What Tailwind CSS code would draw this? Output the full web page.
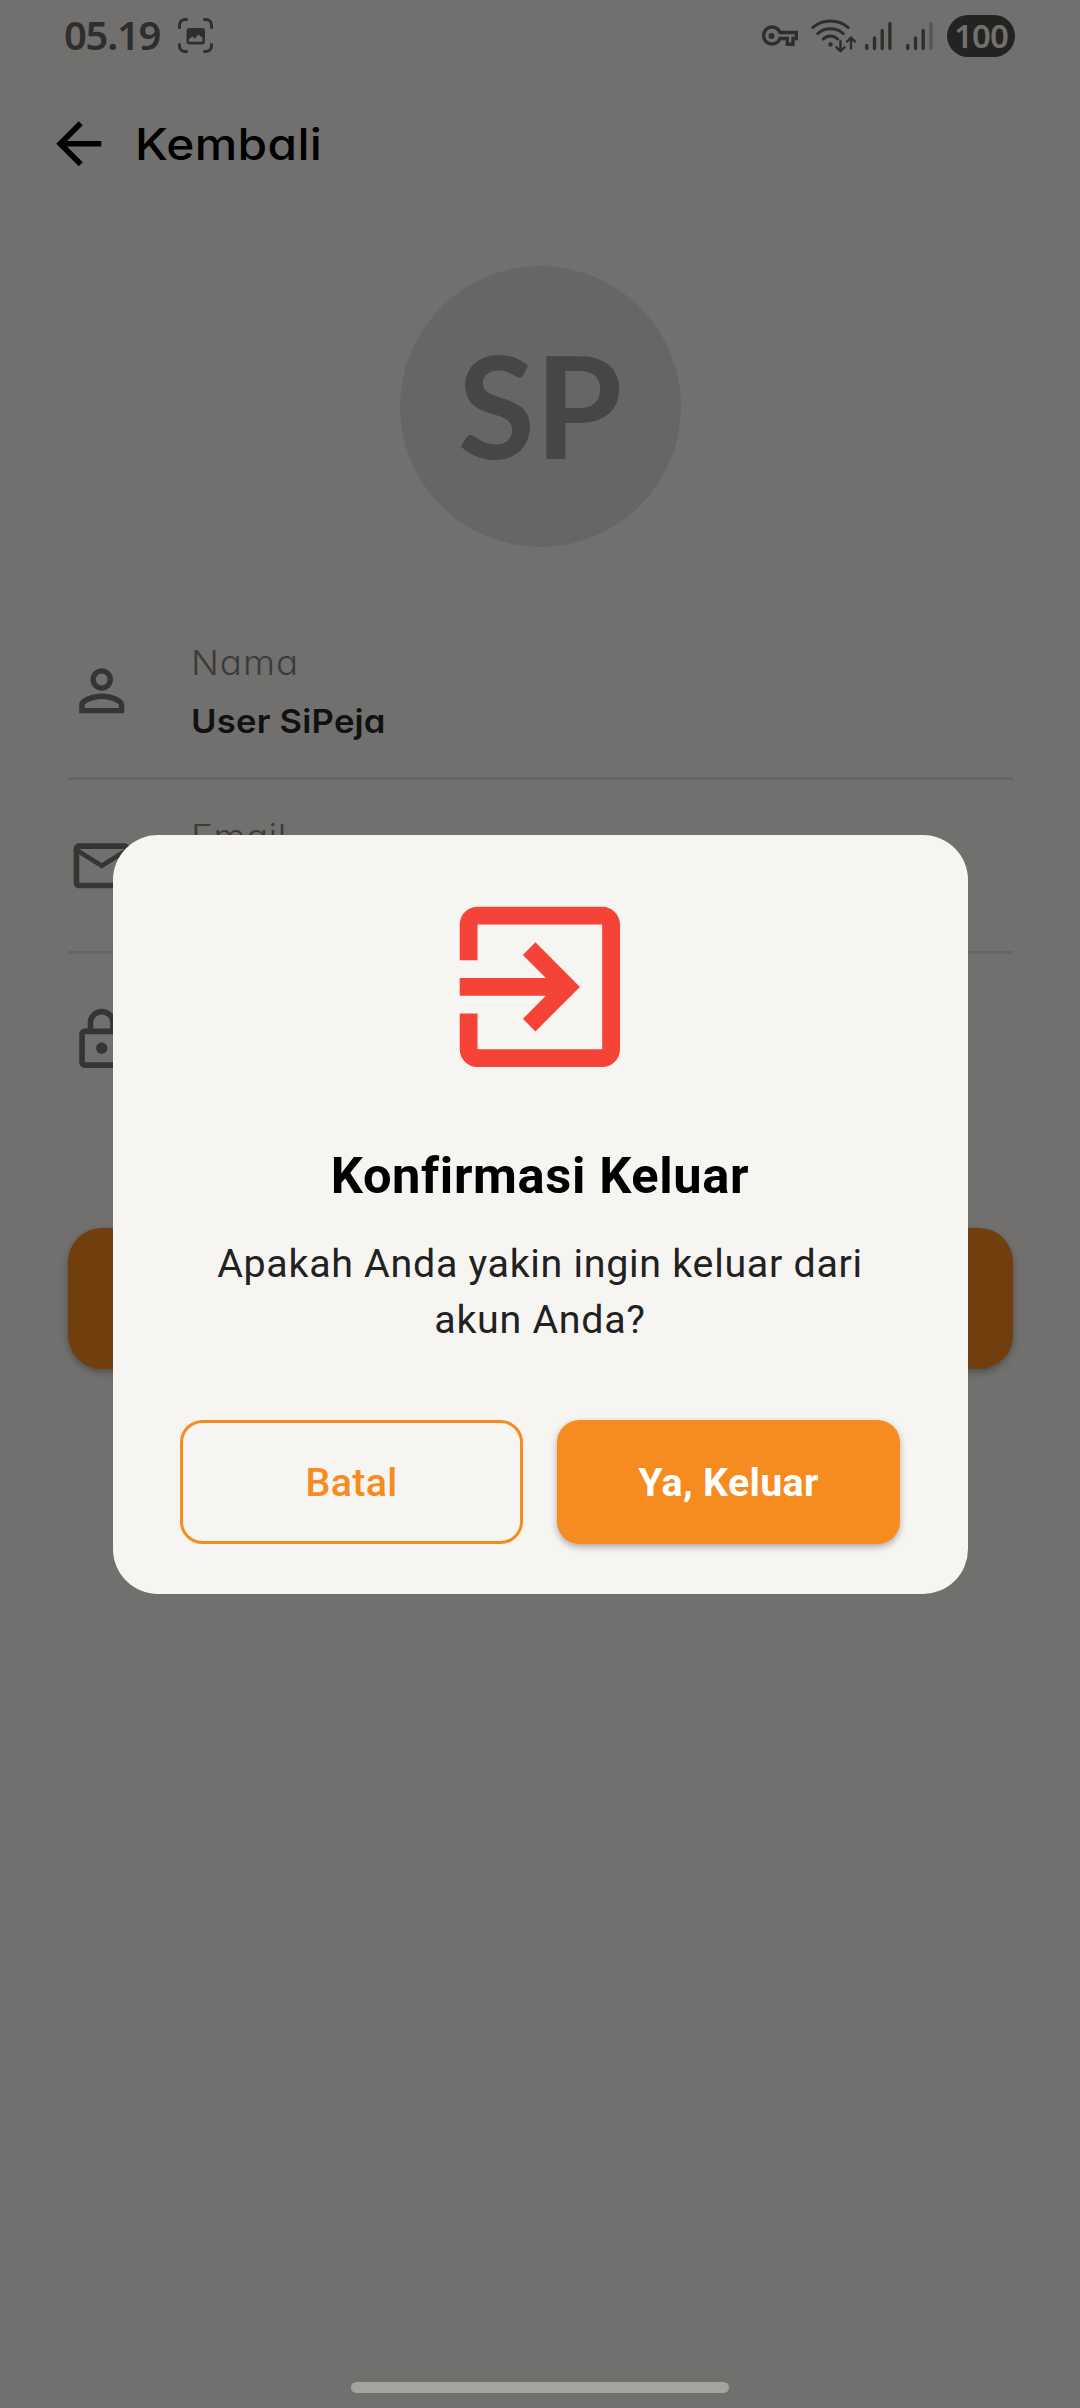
<!DOCTYPE html>
<html lang="id">
<head>
<meta charset="utf-8">
<title>Profil</title>
<script src="https://cdn.jsdelivr.net/npm/@tailwindcss/browser@4"></script>
</head>
<body class="bg-[#71706e]">
<div class="relative flex h-[2408px] w-[1080px] flex-col overflow-hidden bg-[#71706e] font-['Inter',sans-serif]">
  <!-- Status bar -->
  <header class="flex h-[72px] shrink-0 items-center pl-[64px] pr-[65px] text-[#2e2e2c]">
    <div class="w-[114px] whitespace-nowrap pb-[2px] font-['Noto_Sans',sans-serif] text-[40px] leading-[70px] font-semibold tracking-[-1.300px]">05.19</div>
    <svg class="h-[36px] w-[36px]" viewBox="0 0 36 36" fill="none" stroke="currentColor" stroke-width="3" stroke-linecap="round">
      <path d="M1.5 9.5V7a5.5 5.5 0 0 1 5.500-5.500H8.500M26.500 1.500H28a5.500 5.500 0 0 1 5.500 5.500V9.500M33.500 26.500V28a5.500 5.500 0 0 1-5.500 5.500H26.500M8.500 33.500H7A5.500 5.500 0 0 1 1.500 28V26.500"/>
      <path fill="currentColor" stroke="none" fill-rule="evenodd" d="M11.500 10H24q3 0 3 3V23.500q0 3-3 3H11.500q-3 0-3-3V13q0-3 3-3ZM11 21V23.800H24.500V20L20.600 16.500 16.800 20.500 14.300 18.500Z"/>
    </svg>
    <div class="ml-auto flex items-center">
      <svg class="h-[24px] w-[38px]" viewBox="0 0 38 24" fill="none" stroke="currentColor" stroke-width="3.400">
        <path d="M19 8.500H35.300V14.500H32V20.300H26.300V14.500H19A8.500 8.500 0 1 1 19 8.500Z"/><circle cx="10.500" cy="12" r="3" fill="currentColor" stroke="none"/>
      </svg>
      <svg class="ml-[12px] h-[36px] w-[46px]" viewBox="0 0 46 36" fill="none" stroke="currentColor" stroke-width="3" stroke-linecap="round">
        <path d="M1.800 9.500C11.500.8 27.500.8 37.200 9.500M6.800 15.500C13.500 9 25.500 9 32.200 15.500M12.300 21C16.500 17 22.500 17 26.700 21"/>
        <circle cx="19.500" cy="26.500" r="2.200" fill="currentColor" stroke="none"/>
        <path stroke-width="2.400" stroke-linejoin="round" d="M29.500 23V33M25.500 29.300 29.500 33.200 33.500 29.300M40 30.500V20M36 23.500 40 19.500 44 23.500"/>
      </svg>
      <svg class="ml-[8px] h-[30px] w-[27px]" viewBox="0 0 27 30" fill="none" stroke="currentColor" stroke-width="3.400" stroke-linecap="round">
        <path d="M1.800 24.500V27.500M9.500 17V27.500M17.200 9.500V27.500M24.900 2.500V27.500"/>
      </svg>
      <svg class="ml-[14px] h-[30px] w-[27px]" viewBox="0 0 27 30" fill="none" stroke="currentColor" stroke-width="3.400" stroke-linecap="round">
        <path d="M1.800 24.500V27.500M9.500 17V27.500M17.200 9.500V27.500"/><path stroke="#575654" d="M24.900 2.500V27.500"/>
      </svg>
      <div class="ml-[14px] flex h-[42px] w-[68px] items-center justify-center rounded-full bg-[#232321] font-['Noto_Sans',sans-serif] text-[33px] leading-[42px] font-semibold tracking-[-0.8px] text-[#71706e]">100</div>
    </div>
  </header>

  <!-- App bar -->
  <nav class="flex h-[144px] shrink-0 items-center pl-[45px] text-black">
    <svg class="h-[67.5px] w-[67.5px]" viewBox="0 0 24 24" fill="currentColor"><path d="M20 11H7.830l5.590-5.590L12 4l-8 8 8 8 1.410-1.410L7.830 13H20v-2z"/></svg>
    <div class="ml-[22px] origin-left scale-x-[1.100] whitespace-nowrap text-[43.500px] leading-[60px] font-medium tracking-[0.300px] [font-feature-settings:'cv11']">Kembali</div>
  </nav>

  <!-- Profile -->
  <main class="flex flex-col px-[67.500px] pt-[50px]">
    <div class="flex h-[281px] w-[281px] items-center justify-center self-center rounded-full bg-[#666666] pb-[4px] font-['Lato',sans-serif] text-[141px] leading-[277px] font-bold text-[#464646]">SP</div>

    <section class="mt-[58.500px] flex flex-col text-[33px] leading-[59px] text-[#3b3b3a] [font-feature-settings:'cv11']">
      <div class="flex h-[174.400px] items-center border-b-[3px] border-[#666563]">
        <svg class="h-[67.500px] w-[67.500px]" viewBox="0 0 24 24" fill="#353534"><path d="M12 5.900a2.100 2.100 0 1 1 0 4.200 2.100 2.100 0 0 1 0-4.200m0 9c2.970 0 6.100 1.460 6.100 2.100v1.100H5.900V17c0-.64 3.130-2.100 6.100-2.100M12 4C9.790 4 8 5.790 8 8s1.790 4 4 4 4-1.790 4-4-1.790-4-4-4zm0 9c-2.670 0-8 1.340-8 4v3h16v-3c0-2.660-5.330-4-8-4z"/></svg>
        <div class="ml-[56px] flex flex-col whitespace-nowrap pt-[1px]">
          <div class="origin-left scale-x-[1.080] text-[34px] font-light tracking-[0.900px]">Nama</div>
          <div class="origin-left scale-x-[1.050] font-semibold tracking-[0.200px] text-[#111111]">User SiPeja</div>
        </div>
      </div>
      <div class="flex h-[174.400px] items-center border-b-[3px] border-[#666563]">
        <svg class="h-[67.500px] w-[67.500px]" viewBox="0 0 24 24" fill="#353534"><path d="M22 6c0-1.100-.9-2-2-2H4c-1.100 0-2 .9-2 2v12c0 1.100.9 2 2 2h16c1.100 0 2-.9 2-2V6zm-2 0l-8 5-8-5h16zm0 12H4V8l8 5 8-5v10z"/></svg>
        <div class="ml-[56px] flex h-[118px] flex-col"><div class="origin-left scale-x-[1.080] text-[34px] font-light tracking-[0.500px]">Email</div></div>
      </div>
      <div class="flex h-[174.400px] items-center border-b-[3px] border-transparent">
        <svg class="h-[67.500px] w-[67.500px]" viewBox="0 0 24 24" fill="#353534"><path d="M18 8h-1V6c0-2.760-2.240-5-5-5S7 3.240 7 6v2H6c-1.100 0-2 .9-2 2v10c0 1.100.9 2 2 2h12c1.100 0 2-.9 2-2V10c0-1.100-.9-2-2-2zM9 6c0-1.660 1.340-3 3-3s3 1.340 3 3v2H9V6zm9 14H6V10h12v10zm-6-3c1.100 0 2-.9 2-2s-.9-2-2-2-2 .9-2 2 .9 2 2 2z"/></svg>
      </div>
    </section>

    <div class="mt-[99px] h-[141px] rounded-[34px] bg-[#713e0e] shadow-[0_3px_7px_rgba(0,0,0,0.3)]"></div>
  </main>

  <div class="mt-auto mb-[15px] h-[11px] w-[378px] self-center rounded-full bg-[#a3a39f]"></div>

  <!-- Logout confirmation dialog -->
  <div role="dialog" class="absolute top-[835.300px] left-[112.500px] flex h-[759.200px] w-[855px] flex-col items-center rounded-[45px] bg-[#f6f5f2] px-[67.500px] pt-[44.700px] font-['Roboto',sans-serif]">
    <svg class="h-[213.750px] w-[213.750px] shrink-0" viewBox="0 0 24 24" fill="#f54437"><path d="M10.090 15.590L11.500 17l5-5-5-5-1.410 1.410L12.670 11H3v2h9.670l-2.580 2.590zM19 3H5c-1.110 0-2 .9-2 2v4h2V5h14v14H5v-4H3v4c0 1.100.89 2 2 2h14c1.100 0 2-.9 2-2V5c0-1.100-.9-2-2-2z"/></svg>
    <h1 class="mt-[46px] whitespace-nowrap text-[50.600px] leading-[72px] font-bold tracking-[0.650px] text-black">Konfirmasi Keluar</h1>
    <p class="mt-[24px] text-center text-[39.400px] leading-[56px] tracking-[0.700px] text-[#212121]">Apakah Anda yakin ingin keluar dari<br>akun Anda?</p>
    <div class="mt-[72.500px] grid w-full grid-cols-2 gap-[33.750px] text-[39.400px] leading-[56px]">
      <button class="flex h-[123.750px] items-center justify-center rounded-[22.500px] border-[3px] border-[#f68b1f] pt-[2px] font-medium tracking-[0.300px] text-[#f68b1f]">Batal</button>
      <button class="flex h-[123.750px] items-center justify-center rounded-[22.500px] bg-[#f68b1f] pt-[2px] font-bold tracking-[0.300px] text-white shadow-[0_3px_7px_rgba(0,0,0,0.3)]">Ya, Keluar</button>
    </div>
  </div>
</div>
</body>
</html>
